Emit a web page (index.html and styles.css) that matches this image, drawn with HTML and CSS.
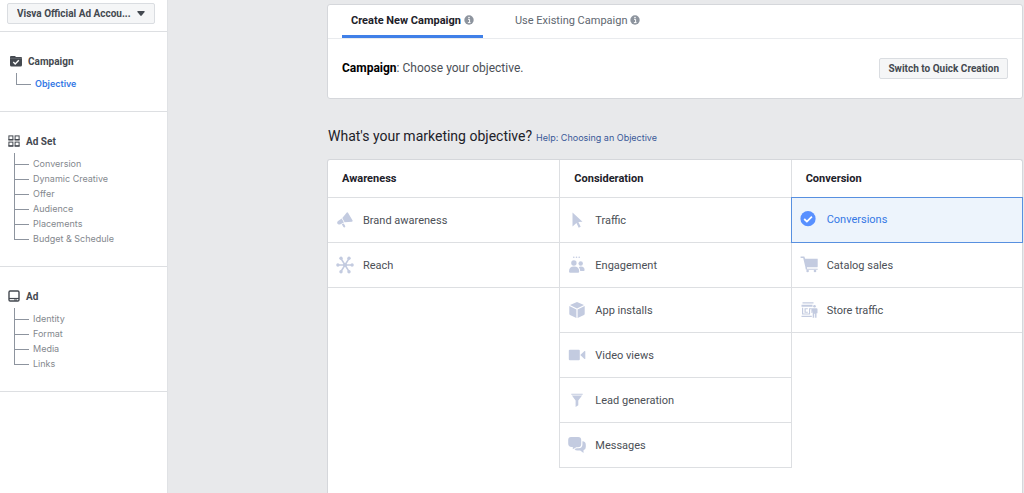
FILE: index.html
```html
<!DOCTYPE html>
<html lang="en">
<head>
<meta charset="utf-8">
<meta name="viewport" content="width=device-width, initial-scale=1">
<title>Create Campaign</title>
<link rel="stylesheet" href="styles.css">
</head>
<body>
<div class="app">
  <aside class="sidebar">
    <div class="account">
      <div class="account-picker">
        <select class="account-select" aria-label="Ad account">
          <option>Visva Official Ad Accou...</option>
        </select>
        <svg class="caret" viewBox="0 0 8 5" aria-hidden="true"><path d="M1 0h6q1 0 .6 1L4.700 4.600q-.7.600-1.400 0L.4 1Q0 0 1 0z"/></svg>
      </div>
    </div>
    <nav aria-label="Campaign steps">
      <section class="step step-campaign">
        <h2 class="step-title">
          <svg class="step-icon" viewBox="0 0 12 12" aria-hidden="true"><path fill="#444950" d="M1 1h4l1 1h5q1 0 1 1v7q0 1.500-1.500 1.500h-9Q0 11.500 0 10V2q0-1 1-1z"/><path d="M0 3.300h12" stroke="#85898f" stroke-width=".5"/><path d="M3.300 7l1.900 1.900 3.600-3.700" fill="none" stroke="#fff" stroke-width="1.400"/></svg>
          Campaign
        </h2>
        <ul class="tree">
          <li class="tree-item"><a class="tree-link current" href="#objective" aria-current="step">Objective</a></li>
        </ul>
      </section>
      <section class="step step-adset">
        <h2 class="step-title">
          <svg class="step-icon" viewBox="0 0 12 12" aria-hidden="true"><g fill="none" stroke="#444950" stroke-width="1"><rect x=".9" y=".9" width="4" height="4"/><rect x="7.100" y=".9" width="4" height="4"/><rect x=".9" y="7.100" width="4" height="4"/><rect x="7.100" y="7.100" width="4" height="4"/><path d="M.5 4.700h4.800M6.700 4.700h4.800M.5 10.900h4.800M6.700 10.900h4.800" stroke-width="1.300"/></g></svg>
          Ad Set
        </h2>
        <ul class="tree">
          <li class="tree-item"><a class="tree-link" href="#conversion">Conversion</a></li>
          <li class="tree-item"><a class="tree-link" href="#dynamic-creative">Dynamic Creative</a></li>
          <li class="tree-item"><a class="tree-link" href="#offer">Offer</a></li>
          <li class="tree-item"><a class="tree-link" href="#audience">Audience</a></li>
          <li class="tree-item"><a class="tree-link" href="#placements">Placements</a></li>
          <li class="tree-item"><a class="tree-link" href="#budget">Budget &amp; Schedule</a></li>
        </ul>
      </section>
      <section class="step step-ad">
        <h2 class="step-title">
          <svg class="step-icon" viewBox="0 0 12 12" aria-hidden="true"><rect x="1" y="1" width="10" height="10" rx="1.200" fill="none" stroke="#444950" stroke-width="1.400"/><path d="M1 8.500h10" stroke="#444950" stroke-width="1.200"/><path d="M6 10h3" stroke="#444950"/></svg>
          Ad
        </h2>
        <ul class="tree">
          <li class="tree-item"><a class="tree-link" href="#identity">Identity</a></li>
          <li class="tree-item"><a class="tree-link" href="#format">Format</a></li>
          <li class="tree-item"><a class="tree-link" href="#media">Media</a></li>
          <li class="tree-item"><a class="tree-link" href="#links">Links</a></li>
        </ul>
      </section>
    </nav>
  </aside>

  <main class="main">
    <section class="card">
      <div class="tabs" role="tablist">
        <button class="tab active" role="tab" aria-selected="true">Create New Campaign
          <svg class="info" viewBox="0 0 10 10" aria-hidden="true"><circle cx="5" cy="5" r="4.700" fill="#8d949e"/><path d="M4 4.300h1.600v3.200M3.900 7.600h2.600" fill="none" stroke="#fff" stroke-width="1"/><circle cx="5" cy="2.500" r=".8" fill="#fff"/></svg>
        </button>
        <button class="tab" role="tab" aria-selected="false">Use Existing Campaign
          <svg class="info" viewBox="0 0 10 10" aria-hidden="true"><circle cx="5" cy="5" r="4.700" fill="#8d949e"/><path d="M4 4.300h1.600v3.200M3.900 7.600h2.600" fill="none" stroke="#fff" stroke-width="1"/><circle cx="5" cy="2.500" r=".8" fill="#fff"/></svg>
        </button>
      </div>
      <div class="intro">
        <p class="intro-text"><strong>Campaign</strong>: Choose your objective.</p>
        <button class="switch">Switch to Quick Creation</button>
      </div>
    </section>

    <div class="question">
      <h1 class="question-title">What's your marketing objective?</h1>
      <a class="help" href="#help">Help: Choosing an Objective</a>
    </div>

    <section class="objectives" id="objective">
      <div class="column">
        <h3 class="column-title">Awareness</h3>
        <button class="option">
          <svg class="icon" viewBox="0 0 18 18" aria-hidden="true"><path d="M10.800 1.600q.6-.8 1.200.2l4.600 7.800q.4 1-.7 1.100L8.600 11.300 6.300 7zM5.700 7.400l2.200 4.200L4 13.400q-1.900.6-2.700-.9-.6-1.600.8-2.500zM5.800 13.300l2-.9 1.400 2.600q.3.800-.4 1.200-.9.500-1.400-.3z"/></svg>
          Brand awareness
        </button>
        <button class="option">
          <svg class="icon" viewBox="0 0 18 18" aria-hidden="true"><path d="M1.500 9h15M5 2.500l8 13M13 2.500l-8 13" fill="none" stroke="#c3cbe0" stroke-width="1.500"/><circle cx="9" cy="9" r="2"/><circle cx="1.900" cy="9" r="1.700"/><circle cx="16.100" cy="9" r="1.700"/><circle cx="5" cy="2.300" r="1.700"/><circle cx="13" cy="2.300" r="1.700"/><circle cx="5" cy="15.700" r="1.700"/><circle cx="13" cy="15.700" r="1.700"/></svg>
          Reach
        </button>
      </div>
      <div class="column column-middle">
        <h3 class="column-title">Consideration</h3>
        <button class="option">
          <svg class="icon" viewBox="0 0 18 18" aria-hidden="true"><path d="M4.500 1.500l10 9.300-4.100.3 2.300 4.700-2 .9-2.200-4.800-4 3.600z"/></svg>
          Traffic
        </button>
        <button class="option">
          <svg class="icon" viewBox="0 0 18 18" aria-hidden="true"><circle cx="5.900" cy="7" r="2.700"/><circle cx="12.700" cy="7.500" r="2.200"/><path d="M1 15.500q0-5 5-5 5.200 0 5.200 5 0 1.300-1.200 1.300H2.200Q1 16.800 1 15.500zM10.800 11.200q1-.7 2.200-.6 3.600.2 3.600 3.300 0 1.100-1 1.100h-3.400q0-2.400-1.400-3.800z"/><circle cx="5.800" cy="1.300" r=".8"/><circle cx="8.500" cy="1.300" r=".8"/><circle cx="11.200" cy="1.300" r=".8"/></svg>
          Engagement
        </button>
        <button class="option">
          <svg class="icon" viewBox="0 0 18 18" aria-hidden="true"><path d="M9 1l7 2.900L9 7.400 2 3.900zM1.300 5L8.400 8.500V17L2 13.900q-.7-.4-.7-1.100zM16.700 5L9.600 8.500V17l6.400-3.100q.7-.4.7-1.100z"/></svg>
          App installs
        </button>
        <button class="option">
          <svg class="icon" viewBox="0 0 18 18" aria-hidden="true"><rect x=".8" y="3.800" width="11" height="10.400" rx="1"/><path d="M12.500 8.700l4-3.600q.8-.5.800.4v7q0 .9-.8.400l-4-3.600z"/></svg>
          Video views
        </button>
        <button class="option">
          <svg class="icon" viewBox="0 0 18 18" aria-hidden="true"><path d="M3.300 2.700h11.400v1.100H3.300zM3.900 4.500h10.200l-3.800 5v4.700l-2.700 1.900V9.500z"/></svg>
          Lead generation
        </button>
        <button class="option">
          <svg class="icon" viewBox="0 0 18 18" aria-hidden="true"><path d="M3 1h7.200q3 0 3 3v4q0 3.200-3.200 3.200H8.300L4.800 13.300v-2.400Q.2 11.500.2 7.600V4q0-3 2.800-3z"/><path d="M14.400 5.300q3.400.2 3.400 3.500v2.300q0 2.700-2.300 3.200v2.800L12.200 14.600H9.500q-2.200 0-3-1.500L8.800 12.200h1.800q3.800-.2 3.800-3.800z"/></svg>
          Messages
        </button>
      </div>
      <div class="column column-last">
        <h3 class="column-title">Conversion</h3>
        <button class="option selected" aria-pressed="true">
          <svg class="icon" viewBox="0 0 18 18" aria-hidden="true"><circle cx="8" cy="7.700" r="7.600" fill="#5890ff"/><path d="M4.200 8l2.700 2.600 5-5" fill="none" stroke="#fff" stroke-width="1.800"/></svg>
          Conversions
        </button>
        <button class="option">
          <svg class="icon" viewBox="0 0 18 18" aria-hidden="true"><path d="M.6.500h3.700l.9 2.200h12.500v7.700q0 .9-.9.900H7v1.400h10.700v1H6.500q-.9 0-.9-1l-.3-2L3.200 2H.6z"/><circle cx="7.600" cy="15" r="1.300"/><circle cx="15" cy="15" r="1.300"/></svg>
          Catalog sales
        </button>
        <button class="option">
          <svg class="icon" viewBox="0 0 18 18" aria-hidden="true"><path d="M2.500 1.300h11v1.200h-11zM1.500 3.700h11v2h-11zM2 6.700h1.200v6.600H2zM4.500 7.300h3.300v1H5.700v2.400h2.100v1H4.500zM9 7.300h2.800v1h-1.700v5H9zM2 12.500h8v1H2zM1.500 14.700h10.300v1.200H1.500z"/><circle cx="14.500" cy="5.200" r="1.300"/><path d="M12.500 7.200h4q1 0 1 1v4h-1V9v7.800h-1.400v-4h-.9v4h-1.500V9.500l-.4 2.500h-.9V8.500q.2-1.300 1.100-1.300z"/></svg>
          Store traffic
        </button>
      </div>
    </section>
  </main>
</div>
</body>
</html>
```
FILE: styles.css
```css
* { box-sizing: border-box; }

body {
  margin: 0;
  background: #e8e9eb;
  color: #4b4f56;
  font-family: Roboto, "Liberation Sans", sans-serif;
  font-size: 11px;
  line-height: 15px;
}

h1, h2, h3, p, ul { margin: 0; padding: 0; }
ul { list-style: none; }
a { text-decoration: none; }
button, select { font: inherit; color: inherit; cursor: pointer; }
svg { flex: none; }

.app { display: flex; min-height: 100vh; }

/* Sidebar */
.sidebar { flex: none; width: 167px; background: #fff; }
.account { padding: 3px 12px 7px 7px; border-bottom: 1px solid #dddfe2; }
.account-picker { display: grid; align-items: center; }
.account-select {
  grid-area: 1 / 1;
  width: 100%;
  height: 21px;
  padding: 0 20px 0 9px;
  border: 1px solid #dadde1;
  border-radius: 2px;
  background: #f5f6f7;
  color: #444950;
  font-size: 10px;
  font-weight: 700;
  appearance: none;
}
.caret {
  grid-area: 1 / 1;
  justify-self: end;
  width: 8px;
  height: 5px;
  margin-right: 10px;
  fill: #444950;
  pointer-events: none;
}

.step { padding: 21px 8px 20px; border-bottom: 1px solid #dddfe2; }
.step-campaign { padding-left: 10px; }
.step-title {
  display: flex;
  align-items: center;
  gap: 6px;
  height: 16px;
  color: #444950;
  font-size: 10px;
  font-weight: 700;
}
.step-icon { width: 12px; height: 12px; }
.tree {
  padding: 7px 0 0 6px;
  font-family: Inter, "Liberation Sans", sans-serif;
  font-size: 9px;
}
.tree-item { display: flex; align-items: center; gap: 4px; height: 15px; }
.tree-item::before {
  content: "";
  width: 14px;
  height: 15px;
  margin-bottom: 14px;
  border: solid #8d949e;
  border-width: 0 0 1px 1px;
}
.tree-item:first-child::before { height: 11px; margin-bottom: 10px; }
.tree-link { color: #84888e; }
.tree-link.current { color: #3578e5; font-weight: 600; }

/* Main area */
.main {
  flex: 1;
  min-width: 0;
  display: flex;
  flex-direction: column;
  padding: 4px 1px 0 159px;
  border-left: 1px solid #e0e2e5;
}
.card {
  border: 1px solid #d5d7db;
  border-radius: 3px;
  background: #fff;
}
.tabs {
  display: flex;
  gap: 23px;
  padding: 0 14px;
  border-bottom: 1px solid #e9ebee;
}
.tab {
  display: flex;
  align-items: center;
  gap: 3px;
  height: 33px;
  padding: 0 9px;
  border: 0;
  border-bottom: 3px solid transparent;
  background: none;
  color: #606770;
}
.tab.active { border-color: #4080e8; color: #1d2129; font-weight: 700; }
.info { width: 10px; height: 10px; }
.intro {
  display: flex;
  align-items: center;
  justify-content: space-between;
  padding: 19px 14px;
}
.intro-text { font-size: 12px; }
.intro-text strong { color: #000; }
.switch {
  height: 21px;
  padding: 0 8px;
  border: 1px solid #dadde1;
  border-radius: 2px;
  background: #f5f6f7;
  color: #444950;
  font-size: 10px;
  font-weight: 700;
}

.question {
  display: flex;
  align-items: baseline;
  gap: 4px;
  padding: 27px 0 13px 1px;
}
.question-title { color: #1d2129; font-size: 14px; font-weight: 400; line-height: 20px; }
.help {
  color: #385898;
  font-family: Inter, "Liberation Sans", sans-serif;
  font-size: 9px;
}

.objectives {
  flex: 1;
  display: grid;
  grid-template-columns: repeat(3, 1fr);
  align-items: start;
  border: 1px solid #d5d7db;
  border-bottom: 0;
  border-radius: 3px 3px 0 0;
  background: #fff;
}
.column-middle {
  margin-right: -1px;
  border: solid #dddfe2;
  border-width: 0 1px;
}
.column-last { padding-left: 1px; }
.column-title {
  height: 38px;
  padding: 0 14px;
  border-bottom: 1px solid #dddfe2;
  color: #1d2129;
  font-size: 11px;
  font-weight: 700;
  line-height: 37px;
}
.option {
  display: flex;
  align-items: center;
  gap: 9px;
  width: 100%;
  height: 45px;
  padding: 0 8px;
  border: 0;
  border-bottom: 1px solid #dddfe2;
  background: none;
  text-align: left;
}
.icon { width: 18px; height: 18px; fill: #c3cbe0; }
.option.selected {
  height: 44px;
  margin-bottom: 1px;
  border-color: transparent;
  background: #edf4fc;
  box-shadow: 0 0 0 1px #5890e0;
  color: #3578e5;
}
```
